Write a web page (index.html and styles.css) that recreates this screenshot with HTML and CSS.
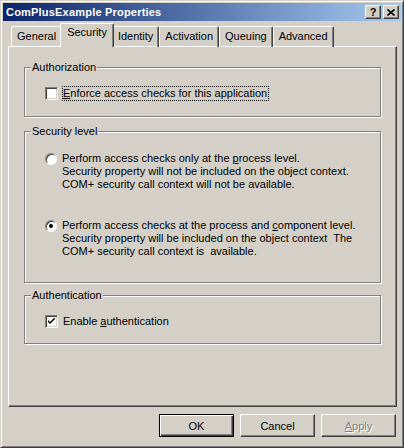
FILE: index.html
```html
<!DOCTYPE html>
<html lang="en">
<head>
  <meta charset="UTF-8" />
  <title>ComPlusExample Properties</title>
  <link rel="stylesheet" href="styles.css">
</head>
<body>
  <div class="window">
    <div class="titlebar">
      <span class="title">ComPlusExample Properties</span>
      <div class="caption-btns">
        <button class="cap-btn help">?</button>
        <button class="cap-btn close">
          <svg width="8" height="7" viewBox="0 0 8 7"><path d="M0.5 0.5 L7.5 6.5 M7.5 0.5 L0.5 6.5" stroke="#000" stroke-width="1.6"/></svg>
        </button>
      </div>
    </div>

    <div class="tabs">
      <div class="tab">General</div>
      <div class="tab active">Security</div>
      <div class="tab">Identity</div>
      <div class="tab">Activation</div>
      <div class="tab">Queuing</div>
      <div class="tab">Advanced</div>
    </div>

    <div class="panel">
      <fieldset class="group group-auth">
        <legend>Authorization</legend>
        <div class="row">
          <span class="check"></span>
          <span class="label focus"><u>E</u>nforce access checks for this application</span>
        </div>
      </fieldset>

      <fieldset class="group group-level">
        <legend>Security level</legend>
        <div class="row option">
          <span class="radio"></span>
          <span class="label">Perform access checks only at the <u>p</u>rocess level.<br>Security property will not be included on the object context.<br>COM+ security call context will not be available.</span>
        </div>
        <div class="row option second">
          <span class="radio checked"></span>
          <span class="label">Perform access checks at the process and <u>c</u>omponent level.<br>Security property will be included on the object context&nbsp; The<br>COM+ security call context is &nbsp;available.</span>
        </div>
      </fieldset>

      <fieldset class="group group-authn">
        <legend>Authentication</legend>
        <div class="row">
          <span class="check checked">
            <svg width="7" height="7" viewBox="0 0 7 7"><path d="M0 2 L0 4 L2 6 L7 1 L7 -1 L2 4 Z" fill="#000"/></svg>
          </span>
          <span class="label">Enable <u>a</u>uthentication</span>
        </div>
      </fieldset>
    </div>

    <div class="buttons">
      <button class="btn default">OK</button>
      <button class="btn">Cancel</button>
      <button class="btn disabled"><u>A</u>pply</button>
    </div>
  </div>
</body>
</html>
```

FILE: styles.css
```css
body {
  margin: 0;
  background: #d4d0c8;
  font-family: 'Liberation Sans', Arial, sans-serif;
  font-size: 11px;
  color: #000;
}

.window {
  width: 404px;
  height: 448px;
  box-sizing: border-box;
  padding: 2px;
  background: #d4d0c8;
  border: 1px solid;
  border-color: #d4d0c8 #404040 #404040 #d4d0c8;
  box-shadow: inset 1px 1px 0 #fff, inset -1px -1px 0 #808080;
  display: flex;
  flex-direction: column;
}

.titlebar {
  height: 18px;
  display: flex;
  align-items: center;
  justify-content: space-between;
  background: linear-gradient(to right, #0a246a, #a6caf0);
  padding: 0 2px 0 3px;
}

.title {
  color: #fff;
  font-weight: bold;
  font-size: 11px;
  letter-spacing: 0.2px;
}

.caption-btns {
  display: flex;
  gap: 2px;
}

.cap-btn {
  width: 16px;
  height: 14px;
  padding: 0;
  background: #d4d0c8;
  border: 1px solid;
  border-color: #fff #404040 #404040 #fff;
  box-shadow: inset -1px -1px 0 #808080;
  display: flex;
  align-items: center;
  justify-content: center;
  font-family: 'Liberation Sans', Arial, sans-serif;
  font-weight: bold;
  font-size: 11px;
  line-height: 1;
  color: #000;
}

.tabs {
  display: flex;
  align-items: flex-end;
  height: 23px;
  margin: 3px 4px 0 7px;
  position: relative;
  z-index: 1;
}

.tab {
  height: 21px;
  box-sizing: border-box;
  padding: 3px 5px 0;
  border: 1px solid;
  border-bottom: none;
  border-color: #fff #404040 transparent #fff;
  border-radius: 2px 2px 0 0;
  box-shadow: inset -1px 0 0 #808080;
  white-space: nowrap;
}

.tab.active {
  height: 24px;
  margin: 0 -2px;
  padding: 2px 6px 0;
  background: #d4d0c8;
  position: relative;
  z-index: 2;
}

.tabs .tab:first-child {
  margin-left: 1px;
}

.panel {
  height: 361px;
  box-sizing: border-box;
  margin: -1px 4px 0 5px;
  padding: 14px 15px 0;
  border: 1px solid;
  border-color: #fff #404040 #404040 #fff;
  box-shadow: inset -1px -1px 0 #808080;
}

.group {
  margin: 0;
  padding: 13px 20px 16px;
  border: 1px solid #808080;
  box-shadow: 1px 1px 0 #fff, inset 1px 1px 0 #fff;
  min-width: 0;
}

.group legend {
  padding: 0 1px;
  margin-left: -14px;
  line-height: 13px;
  background: #d4d0c8;
}

.group-level {
  margin-top: 8px;
  padding: 14px 20px 24px;
}

.group-authn {
  margin-top: 6px;
  padding: 13px 20px 15px;
}

.row {
  display: flex;
  align-items: flex-start;
  line-height: 13px;
}

.option.second {
  margin-top: 28px;
}

.label {
  margin-left: 5px;
}

.label.focus {
  outline: 1px dotted #000;
  outline-offset: 0;
  padding-right: 1px;
}

.check {
  width: 13px;
  height: 13px;
  box-sizing: border-box;
  flex: none;
  background: #fff;
  border: 1px solid;
  border-color: #808080 #fff #fff #808080;
  box-shadow: inset 1px 1px 0 #404040, inset -1px -1px 0 #d4d0c8;
  display: flex;
  align-items: center;
  justify-content: center;
}

.radio {
  width: 12px;
  height: 12px;
  flex: none;
  margin-top: 1px;
  border-radius: 50%;
  box-sizing: border-box;
  background: #fff;
  border: 1px solid;
  border-color: #808080 #fff #fff #808080;
  box-shadow: inset 1px 1px 0 #404040;
  position: relative;
}

.radio.checked::after {
  content: '';
  position: absolute;
  left: 3px;
  top: 3px;
  width: 4px;
  height: 4px;
  border-radius: 50%;
  background: #000;
}

.buttons {
  display: flex;
  justify-content: flex-end;
  gap: 6px;
  margin: 7px 5px 0 0;
}

.btn {
  width: 75px;
  height: 23px;
  padding: 0;
  background: #d4d0c8;
  font-family: 'Liberation Sans', Arial, sans-serif;
  font-size: 11px;
  color: #000;
  border: 1px solid;
  border-color: #fff #404040 #404040 #fff;
  box-shadow: inset -1px -1px 0 #808080;
}

.btn.default {
  border: 1px solid #000;
  box-shadow: inset 1px 1px 0 #fff, inset -1px -1px 0 #404040, inset -2px -2px 0 #808080;
}

.btn.disabled {
  color: #808080;
  text-shadow: 1px 1px 0 #fff;
}
```
